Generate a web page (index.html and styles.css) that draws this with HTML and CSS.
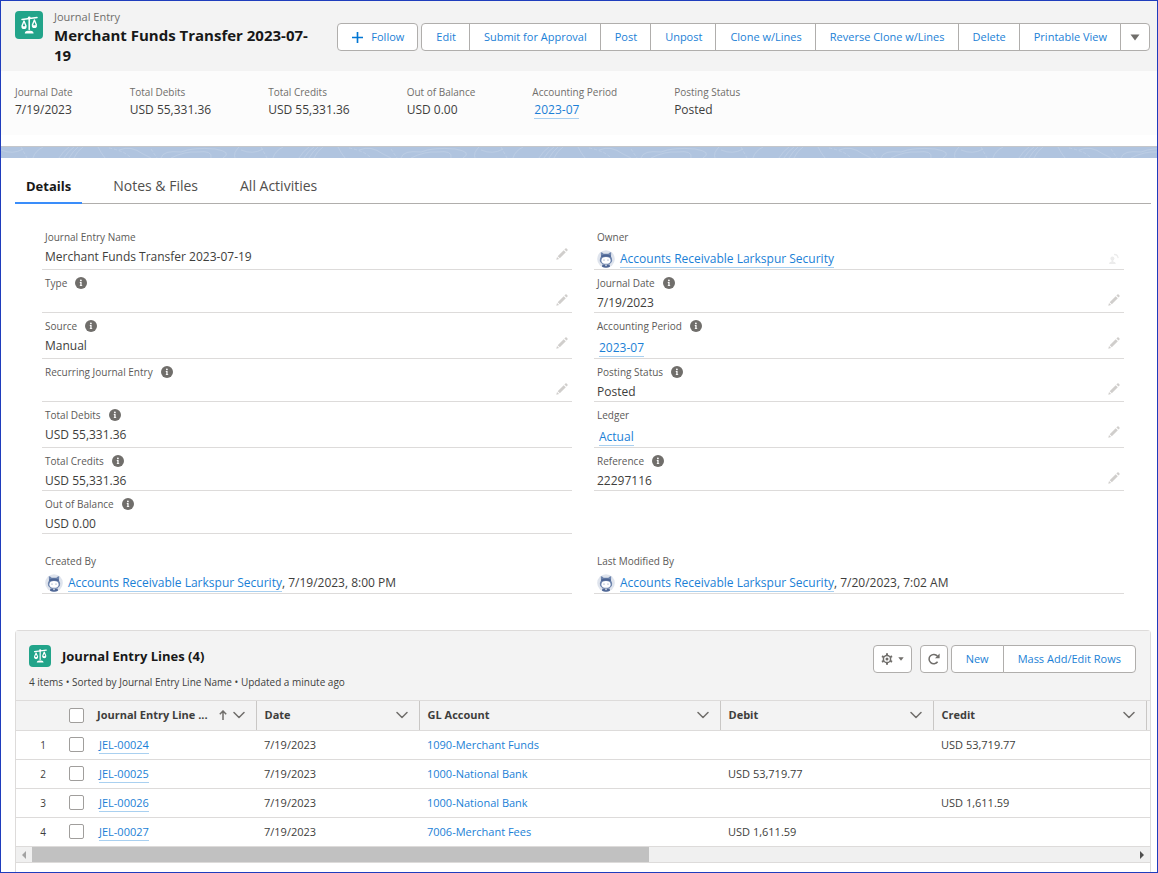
FILE: index.html
```html
<!DOCTYPE html>
<html lang="en">
<head>
  <meta charset="UTF-8">
  <meta name="viewport" content="width=device-width, initial-scale=1">
  <title>Merchant Funds Transfer 2023-07-19 | Journal Entry</title>
  <link rel="stylesheet" href="styles.css">
</head>
<body>
  <svg class="sprite" aria-hidden="true">
    <symbol id="scales" viewBox="0 0 28 28">
      <path d="M7 8.4 L22 6.6 M14.2 7.2 V18.6" fill="none" stroke="#fff" stroke-width="1.5" stroke-linecap="round"/>
      <circle cx="14.2" cy="6.8" r="1.4" fill="#fff"/>
      <path d="M9 10 L7 15 A2.2 2.2 0 0 0 11 15 Z M19.4 9 L17.4 14 A2.2 2.2 0 0 0 21.4 14 Z" fill="none" stroke="#fff" stroke-width="1.4" stroke-linejoin="round"/>
      <path d="M6.4 15.4 h5.2 a2.6 2.6 0 0 1 -5.2 0z M16.8 14.4 h5.2 a2.6 2.6 0 0 1 -5.2 0z" fill="#fff"/>
      <path d="M9.8 22.4 q0.2 -2.6 3 -2.6 h2.8 q2.8 0 3 2.6z" fill="#fff"/>
    </symbol>
    <symbol id="info" viewBox="0 0 12 12">
      <circle cx="6" cy="6" r="6" fill="#706e6b"/>
      <circle cx="5.9" cy="3.4" r="0.9" fill="#fff"/>
      <path d="M4.8 5.1h1.8v3.1h0.6v0.9H4.8v-0.9h0.5V6H4.8z" fill="#fff"/>
    </symbol>
    <symbol id="pencil" viewBox="0 0 12 12">
      <path d="M0.3 11.7 L1 8.9 L3.1 11z M1.7 8.2 L7.7 2.2 L9.8 4.3 L3.8 10.3z M8.4 1.5 L9.4 0.5 Q10 0 10.6 0.5 L11.5 1.4 Q12 2 11.5 2.6 L10.5 3.6z" fill="#d0cecc"/>
    </symbol>
    <symbol id="owner" viewBox="0 0 12 12">
      <circle cx="4.4" cy="5.4" r="2" fill="#ececec"/>
      <path d="M3.6 6.5h1.6v2.1q2.6 0.4 2.6 2.4H1q0-2 2.6-2.4z" fill="#ececec"/>
      <path d="M6 1.6 q3.4-0.6 4.2 3.6" fill="none" stroke="#ececec" stroke-width="1.3"/>
    </symbol>
    <symbol id="avatar" viewBox="0 0 18 18">
      <circle cx="9" cy="9" r="8.8" fill="#dfe4ed"/>
      <path d="M3.8 2.2 Q5.6 2 6.6 3.8 H11.4 Q12.4 2 14.2 2.2 L14 6.4 Q15.6 8.6 15 11.4 Q13 14.6 9 14.6 Q5 14.6 3 11.4 Q2.4 8.6 4 6.4z" fill="#6d84ad"/>
      <path d="M4 5.8 Q9 3.4 14 5.8 L13.4 7.4 Q9 5.6 4.6 7.4z" fill="#4d6594"/>
      <ellipse cx="9" cy="10.4" rx="4.6" ry="3.4" fill="#fff"/>
      <circle cx="7" cy="10" r="0.6" fill="#6d84ad"/>
      <circle cx="11" cy="10" r="0.6" fill="#6d84ad"/>
      <path d="M5.4 14.6 h7.2 l0.4 2.2 Q9 18.8 5 16.8z" fill="#4d6594"/>
      <path d="M8 14.8h2l-1 1.6z" fill="#fff"/>
    </symbol>
    <symbol id="chevron" viewBox="0 0 12 8">
      <path d="M1 1.5 L6 6.5 L11 1.5" fill="none" stroke="#706e6b" stroke-width="1.5" stroke-linecap="round" stroke-linejoin="round"/>
    </symbol>
  </svg>

  <header class="record-header">
    <div class="title-bar">
      <svg class="entity-icon"><use href="#scales"/></svg>
      <div class="title-text">
        <p class="entity-name">Journal Entry</p>
        <h1>Merchant Funds Transfer 2023-07-<wbr>19</h1>
      </div>
      <div class="actions">
        <button class="btn follow" type="button">
          <svg viewBox="0 0 10 10"><path d="M5 0v10M0 5h10" stroke="#0176d3" stroke-width="1.5"/></svg>
          Follow
        </button>
        <div class="btn-group">
          <button class="btn" type="button">Edit</button>
          <button class="btn" type="button">Submit for Approval</button>
          <button class="btn" type="button">Post</button>
          <button class="btn" type="button">Unpost</button>
          <button class="btn" type="button">Clone w/Lines</button>
          <button class="btn" type="button">Reverse Clone w/Lines</button>
          <button class="btn" type="button">Delete</button>
          <button class="btn" type="button">Printable View</button>
          <button class="btn more" type="button" aria-label="More actions">
            <svg viewBox="0 0 10 7"><path d="M0.5 0.5h9L5 6.5z" fill="#706e6b"/></svg>
          </button>
        </div>
      </div>
    </div>
    <dl class="highlights">
      <div><dt>Journal Date</dt><dd>7/19/2023</dd></div>
      <div><dt>Total Debits</dt><dd>USD 55,331.36</dd></div>
      <div><dt>Total Credits</dt><dd>USD 55,331.36</dd></div>
      <div><dt>Out of Balance</dt><dd>USD 0.00</dd></div>
      <div><dt>Accounting Period</dt><dd><a class="lookup" href="#">2023-07</a></dd></div>
      <div><dt>Posting Status</dt><dd>Posted</dd></div>
    </dl>
  </header>

  <svg class="band" aria-hidden="true">
    <defs>
      <pattern id="topo" width="240" height="11" patternUnits="userSpaceOnUse">
        <g fill="none" stroke="#bccde4" stroke-width="1">
          <path d="M58 11Q62 4 68 0M63 11Q67 4 73 0M68 11Q72 4 77 0M73 11Q76 4 82 0M97 0Q100 6 104 11"/>
          <path d="M118 3Q130 -2 142 7L150 11M160 11Q162 3 180 5Q192 0 214 2Q232 5 222 11M170 11Q184 4 196 5Q212 3 210 11"/>
          <path d="M0 3Q12 8 22 2M32 11Q34 4 42 0M238 0Q232 6 234 11"/>
          <path d="M20 0L26 11M108 1Q124 4 130 11M150 2L156 11" stroke-dasharray="3 2"/>
        </g>
      </pattern>
    </defs>
    <rect width="100%" height="11" fill="url(#topo)"/>
  </svg>

  <main>
    <nav class="tabs">
      <a class="active" href="#">Details</a>
      <a href="#">Notes &amp; Files</a>
      <a href="#">All Activities</a>
    </nav>

    <section class="fields">
      <div class="field">
        <div class="label">Journal Entry Name</div>
        <div class="value">Merchant Funds Transfer 2023-07-19</div>
        <button class="edit" type="button" aria-label="Edit Journal Entry Name"><svg><use href="#pencil"/></svg></button>
      </div>
      <div class="field tall">
        <div class="label">Owner</div>
        <div class="value"><svg class="avatar"><use href="#avatar"/></svg><a class="user" href="#">Accounts Receivable Larkspur Security</a></div>
        <button class="edit owner" type="button" aria-label="Change Owner"><svg><use href="#owner"/></svg></button>
      </div>
      <div class="field">
        <div class="label">Type <svg><use href="#info"/></svg></div>
        <div class="value"></div>
        <button class="edit" type="button" aria-label="Edit Type"><svg><use href="#pencil"/></svg></button>
      </div>
      <div class="field">
        <div class="label">Journal Date <svg><use href="#info"/></svg></div>
        <div class="value">7/19/2023</div>
        <button class="edit" type="button" aria-label="Edit Journal Date"><svg><use href="#pencil"/></svg></button>
      </div>
      <div class="field">
        <div class="label">Source <svg><use href="#info"/></svg></div>
        <div class="value">Manual</div>
        <button class="edit" type="button" aria-label="Edit Source"><svg><use href="#pencil"/></svg></button>
      </div>
      <div class="field tall">
        <div class="label">Accounting Period <svg><use href="#info"/></svg></div>
        <div class="value"><a class="lookup" href="#">2023-07</a></div>
        <button class="edit" type="button" aria-label="Edit Accounting Period"><svg><use href="#pencil"/></svg></button>
      </div>
      <div class="field">
        <div class="label">Recurring Journal Entry <svg><use href="#info"/></svg></div>
        <div class="value"></div>
        <button class="edit" type="button" aria-label="Edit Recurring Journal Entry"><svg><use href="#pencil"/></svg></button>
      </div>
      <div class="field">
        <div class="label">Posting Status <svg><use href="#info"/></svg></div>
        <div class="value">Posted</div>
        <button class="edit" type="button" aria-label="Edit Posting Status"><svg><use href="#pencil"/></svg></button>
      </div>
      <div class="field">
        <div class="label">Total Debits <svg><use href="#info"/></svg></div>
        <div class="value">USD 55,331.36</div>
      </div>
      <div class="field tall">
        <div class="label">Ledger</div>
        <div class="value"><a class="lookup" href="#">Actual</a></div>
        <button class="edit" type="button" aria-label="Edit Ledger"><svg><use href="#pencil"/></svg></button>
      </div>
      <div class="field">
        <div class="label">Total Credits <svg><use href="#info"/></svg></div>
        <div class="value">USD 55,331.36</div>
      </div>
      <div class="field">
        <div class="label">Reference <svg><use href="#info"/></svg></div>
        <div class="value">22297116</div>
        <button class="edit" type="button" aria-label="Edit Reference"><svg><use href="#pencil"/></svg></button>
      </div>
      <div class="field">
        <div class="label">Out of Balance <svg><use href="#info"/></svg></div>
        <div class="value">USD 0.00</div>
      </div>
    </section>

    <section class="fields">
      <div class="field tall">
        <div class="label">Created By</div>
        <div class="value"><svg class="avatar"><use href="#avatar"/></svg><a class="user" href="#">Accounts Receivable Larkspur Security</a><span>, 7/19/2023, 8:00 PM</span></div>
      </div>
      <div class="field tall">
        <div class="label">Last Modified By</div>
        <div class="value"><svg class="avatar"><use href="#avatar"/></svg><a class="user" href="#">Accounts Receivable Larkspur Security</a><span>, 7/20/2023, 7:02 AM</span></div>
      </div>
    </section>

    <section class="card">
      <div class="card-header">
        <div class="card-title">
          <svg class="entity-icon small"><use href="#scales"/></svg>
          <h2>Journal Entry Lines (4)</h2>
        </div>
        <p class="summary">4 items • Sorted by Journal Entry Line Name • Updated a minute ago</p>
        <div class="card-actions">
          <button class="btn gear" type="button" aria-label="List view controls">
            <svg class="cog" viewBox="0 0 12 12"><g fill="none" stroke="#706e6b"><circle cx="6" cy="6" r="3.6" stroke-width="1.5"/><path d="M6 0.2v2M6 9.8v2M1 3.1l1.6 1M9.4 7.9l1.6 1M1 8.9l1.6-1M9.4 4.1l1.6-1" stroke-width="2"/></g><circle cx="6" cy="6" r="1.5" fill="#706e6b"/></svg>
            <svg class="caret" viewBox="0 0 6 4"><path d="M0.3 0.3h5.4L3 3.7z" fill="#706e6b"/></svg>
          </button>
          <button class="btn refresh" type="button" aria-label="Refresh">
            <svg class="cog" viewBox="0 0 12 12"><path d="M9.6 8.8A4.7 4.7 0 1 1 9.4 3.1" fill="none" stroke="#706e6b" stroke-width="1.5"/><path d="M11.6 0.6V5.2H7z" fill="#706e6b"/></svg>
          </button>
          <div class="btn-group">
            <button class="btn" type="button">New</button>
            <button class="btn" type="button">Mass Add/Edit Rows</button>
          </div>
        </div>
      </div>

      <table>
        <colgroup>
          <col class="col-num"><col class="col-check"><col class="col-name"><col class="col-date"><col><col class="col-amount"><col class="col-amount"><col class="col-end">
        </colgroup>
        <thead>
          <tr>
            <th></th>
            <th class="check"><input type="checkbox" aria-label="Select all rows"></th>
            <th class="sorted"><div class="head"><span>Journal Entry Line ...</span><svg class="arrow" viewBox="0 0 8 10"><path d="M4 10V1M0.8 4.2L4 1l3.2 3.2" fill="none" stroke="#706e6b" stroke-width="1.5"/></svg><svg class="chev"><use href="#chevron"/></svg></div></th>
            <th><div class="head"><span>Date</span><svg class="chev"><use href="#chevron"/></svg></div></th>
            <th><div class="head"><span>GL Account</span><svg class="chev"><use href="#chevron"/></svg></div></th>
            <th><div class="head"><span>Debit</span><svg class="chev"><use href="#chevron"/></svg></div></th>
            <th><div class="head"><span>Credit</span><svg class="chev"><use href="#chevron"/></svg></div></th>
            <th></th>
          </tr>
        </thead>
        <tbody>
          <tr>
            <td class="num">1</td>
            <td class="check"><input type="checkbox" aria-label="Select JEL-00024"></td>
            <td><a class="lookup" href="#">JEL-00024</a></td>
            <td>7/19/2023</td>
            <td><a href="#">1090-Merchant Funds</a></td>
            <td></td>
            <td>USD 53,719.77</td>
            <td></td>
          </tr>
          <tr>
            <td class="num">2</td>
            <td class="check"><input type="checkbox" aria-label="Select JEL-00025"></td>
            <td><a class="lookup" href="#">JEL-00025</a></td>
            <td>7/19/2023</td>
            <td><a href="#">1000-National Bank</a></td>
            <td>USD 53,719.77</td>
            <td></td>
            <td></td>
          </tr>
          <tr>
            <td class="num">3</td>
            <td class="check"><input type="checkbox" aria-label="Select JEL-00026"></td>
            <td><a class="lookup" href="#">JEL-00026</a></td>
            <td>7/19/2023</td>
            <td><a href="#">1000-National Bank</a></td>
            <td></td>
            <td>USD 1,611.59</td>
            <td></td>
          </tr>
          <tr>
            <td class="num">4</td>
            <td class="check"><input type="checkbox" aria-label="Select JEL-00027"></td>
            <td><a class="lookup" href="#">JEL-00027</a></td>
            <td>7/19/2023</td>
            <td><a href="#">7006-Merchant Fees</a></td>
            <td>USD 1,611.59</td>
            <td></td>
            <td></td>
          </tr>
        </tbody>
      </table>
      <div class="scrollbar" aria-hidden="true">
        <svg viewBox="0 0 16 16"><path d="M10 4v8L6 8z" fill="#a3a3a3"/></svg>
        <div class="track"><div class="thumb"></div></div>
        <svg viewBox="0 0 16 16"><path d="M6 4v8l4-4z" fill="#505050"/></svg>
      </div>
    </section>
  </main>
</body>
</html>
```
FILE: styles.css
```css
* { box-sizing: border-box; }
body {
  margin: 0;
  min-height: 100vh;
  display: flex;
  flex-direction: column;
  border: 1px solid #1f3dbd;
  background: #fff;
  color: #3e3e3c;
  font-family: "Open Sans", "Segoe UI", sans-serif;
  font-size: 12px;
  line-height: 18px;
}
h1, h2, p, dl, dd { margin: 0; }
a {
  color: #1b7fd6;
  text-decoration: none;
}
.sprite {
  position: absolute;
  width: 0;
  height: 0;
}

/* record header */
.record-header {
  padding-bottom: 11px;
  border-bottom: 1px solid #c4c6ca;
}
.title-bar {
  display: flex;
  align-items: flex-start;
  padding: 8px 7px 6px 14px;
  background: #f3f3f3;
}
.entity-icon {
  flex: none;
  width: 28px;
  height: 28px;
  margin-top: 2px;
  border-radius: 4px;
  background: #22a48a;
}
.title-text {
  flex: 1;
  padding: 0 20px 0 11px;
}
.entity-name {
  font-size: 11px;
  line-height: 16px;
  color: #706e6b;
}
h1 {
  font-size: 15px;
  line-height: 20px;
  font-weight: 700;
  color: #181818;
}
.actions {
  display: flex;
  gap: 3px;
  margin-top: 14px;
}
.btn {
  display: flex;
  align-items: center;
  justify-content: center;
  height: 28px;
  padding: 0 13px 0 14px;
  border: 1px solid #b0aeac;
  border-radius: 4px;
  background: #fff;
  color: #1b7fd6;
  font: inherit;
  font-size: 11px;
  white-space: nowrap;
  cursor: pointer;
}
.btn:hover { background: #f4f6f9; }
.follow { gap: 8px; }
.follow svg {
  width: 11px;
  height: 11px;
}
.btn-group { display: flex; }
.btn-group .btn { border-radius: 0; }
.btn-group .btn + .btn { margin-left: -1px; }
.btn-group .btn:first-child { border-radius: 4px 0 0 4px; }
.btn-group .btn:last-child { border-radius: 0 4px 4px 0; }
.btn-group .more { padding: 0 9px; }
.more svg {
  width: 10px;
  height: 7px;
}
.highlights {
  display: flex;
  gap: 57px;
  height: 64px;
  padding: 13px 14px;
  background: #fcfcfc;
}
.highlights dt {
  font-size: 10px;
  line-height: 17px;
  color: #706e6b;
}
.highlights dd { line-height: 18px; }
.lookup {
  display: inline-block;
  margin-left: 2px;
  line-height: 16px;
  border-bottom: 1px solid #a9d0f0;
}
.band {
  display: block;
  flex: none;
  width: 100%;
  height: 11px;
  background: #b0c4df;
}

/* tabs */
main {
  flex: 1;
  display: flex;
  flex-direction: column;
  padding: 12px 6px 0 14px;
}
.tabs {
  display: flex;
  gap: 20px;
  margin-bottom: 20px;
  border-bottom: 1px solid #b0aeac;
}
.tabs a {
  padding: 0 11px;
  font-size: 14px;
  line-height: 32px;
  color: #514f4d;
}
.tabs .active {
  margin-bottom: -1px;
  border-bottom: 2px solid #3a8dfa;
  font-size: 13px;
  font-weight: 700;
  color: #181818;
}

/* record fields */
.fields {
  display: grid;
  grid-template-columns: 1fr 1fr;
  column-gap: 22px;
  margin: 0 27px 14px;
}
.field {
  display: grid;
  grid-template-columns: 1fr auto;
  align-content: start;
  min-height: 43px;
  padding: 5px 4px 0 3px;
  border-bottom: 1px solid #dddbda;
}
.tall { min-height: 46px; }
.label {
  grid-column: 1 / -1;
  display: flex;
  align-items: center;
  gap: 8px;
  font-size: 10px;
  line-height: 16px;
  color: #5c5a58;
}
.label svg {
  width: 12px;
  height: 12px;
}
.value {
  display: flex;
  align-items: flex-end;
  height: 21px;
}
.tall .value { height: 23px; }
.edit {
  margin-top: 2px;
  padding: 0;
  height: 14px;
  border: 0;
  background: none;
  cursor: pointer;
}
.edit svg {
  display: block;
  width: 12px;
  height: 12px;
}
.owner { margin-top: 7px; }
.avatar {
  width: 18px;
  height: 18px;
  margin-right: 5px;
}
.user {
  line-height: 17px;
  border-bottom: 1px solid #a9d0f0;
}

/* related list */
.card {
  flex: 1;
  margin-top: 22px;
  border: 1px solid #dddbda;
  border-bottom: 0;
  border-radius: 4px 4px 0 0;
}
.card-header {
  display: grid;
  grid-template-columns: 1fr auto;
  padding: 14px 14px 9px 13px;
  border-bottom: 1px solid #dddbda;
  background: #f3f3f3;
}
.card-title {
  display: flex;
  align-items: center;
  gap: 11px;
}
.small {
  width: 22px;
  height: 22px;
  margin: 0;
}
h2 {
  font-size: 13px;
  line-height: 22px;
  color: #181818;
}
.summary {
  grid-row: 2;
  margin-top: 6px;
  font-size: 10px;
}
.card-actions {
  grid-row: 1 / 3;
  grid-column: 2;
  display: flex;
  align-items: flex-start;
}
.card-actions .btn { padding: 0 14px; }
.card-actions .gear {
  gap: 5px;
  margin-right: 8px;
  padding: 0 7px;
}
.card-actions .refresh {
  margin-right: 3px;
  padding: 0 7px;
}
.cog {
  width: 12px;
  height: 12px;
}
.caret {
  width: 6px;
  height: 4px;
}
table {
  width: 100%;
  table-layout: fixed;
  border-collapse: collapse;
  font-size: 11px;
}
.col-num { width: 37px; }
.col-check { width: 36px; }
.col-name { width: 167px; }
.col-date { width: 163px; }
.col-amount { width: 213px; }
.col-end { width: 4px; }
th, td {
  height: 29px;
  padding: 0 0 0 8px;
  border-bottom: 1px solid #dddbda;
  text-align: left;
}
th { background: #f3f3f3; }
th:nth-child(n+3) { border-right: 1px solid #c9c7c5; }
th:nth-child(2) { border-right: 0; }
th:last-child { border-right: 0; }
th:last-child, td:last-child { padding: 0; }
.head {
  display: flex;
  align-items: center;
  padding-right: 11px;
}
.head span {
  flex: 1;
  white-space: nowrap;
}
.sorted .head { gap: 6px; }
.arrow {
  width: 8px;
  height: 10px;
}
.chev {
  width: 12px;
  height: 8px;
}
.num {
  padding: 0 7px 0 0;
  text-align: right;
  font-size: 10px;
}
.check { padding: 0; }
input[type="checkbox"] {
  appearance: none;
  display: block;
  width: 15px;
  height: 15px;
  margin: 0 0 0 16px;
  border: 1px solid #a09e9c;
  border-radius: 2px;
  background: #fff;
}
input[type="checkbox"]:checked { background: #0176d3; }
.scrollbar {
  display: flex;
  height: 16px;
  border-bottom: 1px solid #dddbda;
  background: #f0f0f0;
}
.scrollbar svg {
  width: 16px;
  height: 16px;
}
.track { flex: 1; }
.thumb {
  width: 56%;
  height: 15px;
  background: #c1c1c1;
}
```
